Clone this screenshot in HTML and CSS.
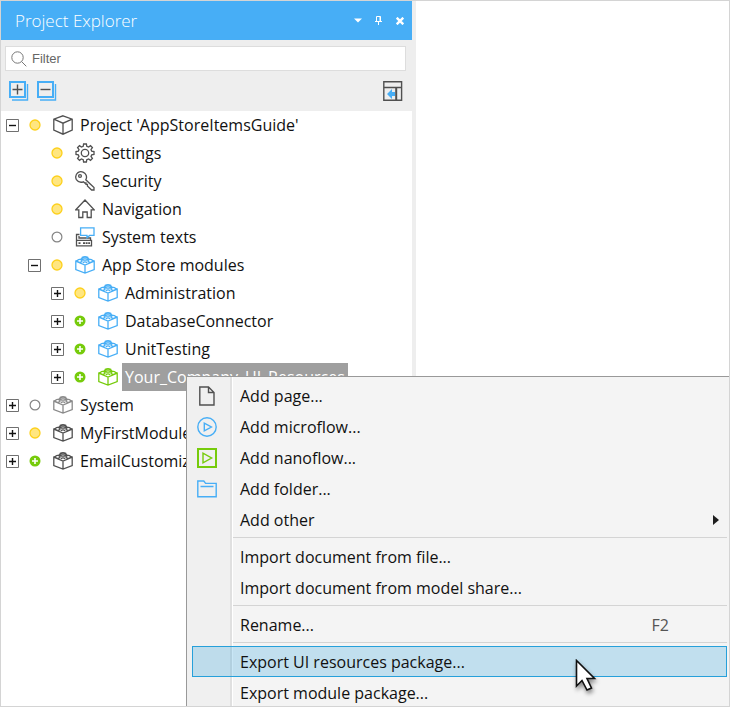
FILE: index.html
```html
<!DOCTYPE html>
<html lang="en">
<head>
<meta charset="utf-8">
<title>Project Explorer</title>
<link rel="stylesheet" href="styles.css">
</head>
<body>
<svg class="sprite" aria-hidden="true">
  <symbol id="brick" viewBox="0 0 20 20">
    <path d="M.8 6.2V14.6L10 18 19.2 14.6V6.2L10 10zM10 10V18M.8 6.2 3 5.2M19.2 6.2 17 5.2M5.6 4 7.2 3.4M14.4 4 12.8 3.4M7.2 2.4Q10 .8 12.8 2.4V4.4Q10 6 7.2 4.4zM7.2 2.4Q10 4 12.8 2.4M2.6 5.2Q4.6 3.4 6.8 5.2V6.6Q4.6 8 2.6 6.6zM13.2 5.2Q15.4 3.4 17.4 5.2V6.6Q15.4 8 13.2 6.6zM7.8 7.6Q10 6.2 12.2 7.6"/>
  </symbol>
  <symbol id="plus-box" viewBox="0 0 13 13"><path class="box" d="M.5.5H12.5V12.5H.5z"/><path class="mark" d="M3 6.5H10M6.5 3V10"/></symbol>
  <symbol id="minus-box" viewBox="0 0 13 13"><path class="box" d="M.5.5H12.5V12.5H.5z"/><path class="mark" d="M3 6.5H10"/></symbol>
  <symbol id="dot-yellow" viewBox="0 0 12 12"><circle cx="6" cy="6" r="5" fill="#ffe680" stroke="#fdd01c" stroke-width="1.3"/></symbol>
  <symbol id="dot-empty" viewBox="0 0 12 12"><circle cx="6" cy="6" r="4.9" fill="#fff" stroke="#858585" stroke-width="1.2"/></symbol>
  <symbol id="dot-green" viewBox="0 0 12 12"><circle cx="6" cy="6" r="5.5" fill="#76cb0b"/><path d="M3 6H9M6 3V9" stroke="#fff" stroke-width="1.6"/></symbol>
</svg>

<div class="frame">
  <section class="panel">
    <header class="title-bar">
      <h1>Project Explorer</h1>
      <button type="button" aria-label="Window options"><svg width="8" height="5" viewBox="0 0 8 5"><path d="M0 .5H8L4 4.5z" fill="#fff"/></svg></button>
      <button type="button" aria-label="Pin"><svg width="8" height="9" viewBox="0 0 8 9"><path d="M1.5 5V.5H5.5V5M0 5.5H7M3.5 5.5V9M5 .5V5" fill="none" stroke="#fff"/></svg></button>
      <button type="button" aria-label="Close"><svg width="8" height="8" viewBox="0 0 8 8"><path d="M.7.7 7.3 7.3M7.3.7.7 7.3" stroke="#fff" stroke-width="2.4"/></svg></button>
    </header>
    <div class="tools">
      <label class="filter">
        <svg width="16" height="16" viewBox="0 0 16 16"><circle cx="6.5" cy="6.5" r="5.7" fill="none" stroke="#777"/><path d="M10.6 10.6 15.3 15.3" stroke="#777"/></svg>
        <input type="text" placeholder="Filter" aria-label="Filter">
      </label>
      <div class="tool-row">
        <button type="button" aria-label="Expand all"><svg width="20" height="20" viewBox="0 0 20 20"><path d="M3 19H18.5V3" class="blue"/><path d="M1 1H16V16H1z" class="blue thick"/><path d="M3.5 8.5H13.5M8.5 3.5V13.5" class="dark"/></svg></button>
        <button type="button" aria-label="Collapse all"><svg width="20" height="20" viewBox="0 0 20 20"><path d="M3 19H18.5V3" class="blue"/><path d="M1 1H16V16H1z" class="blue thick"/><path d="M3.5 8.5H13.5" class="dark"/></svg></button>
        <button type="button" class="dock" aria-label="Select in explorer"><svg width="20" height="20" viewBox="0 0 20 20"><path d="M.8.8H18.6V19.2H.8zM.8 6.5H18.6" class="dark"/><path d="M13.2 6.5V19" class="dark thick"/><path d="M4 13 9 8V11H12V15H9V18z" fill="#47aef6"/></svg></button>
      </div>
    </div>

    <ul class="tree">
      <li class="row"><button type="button" class="toggle" aria-label="Collapse"><svg><use href="#minus-box"/></svg></button><svg class="dot"><use href="#dot-yellow"/></svg>
        <svg class="icon" viewBox="0 0 20 20"><path d="M10 .8 19.2 4.2V15L10 19.2.8 15V4.2zM.8 4.2 10 8.2 19.2 4.2M10 8.2V19.2"/></svg><span class="label">Project 'AppStoreItemsGuide'</span></li>
      <li class="row level-1"><span class="toggle"></span><svg class="dot"><use href="#dot-yellow"/></svg>
        <svg class="icon" viewBox="0 0 20 20"><circle cx="10" cy="10" r="3.7"/><path d="M8.6 1H11.4L11.8 3.4 13.6 4.1 15.5 2.7 17.4 4.6 16 6.5 16.7 8.2 19 8.6V11.4L16.7 11.8 16 13.5 17.4 15.4 15.5 17.3 13.6 15.9 11.8 16.6 11.4 19H8.6L8.2 16.6 6.4 15.9 4.5 17.3 2.6 15.4 4 13.5 3.3 11.8 1 11.4V8.6L3.3 8.2 4 6.5 2.6 4.6 4.5 2.7 6.4 4.1 8.2 3.4z"/></svg><span class="label">Settings</span></li>
      <li class="row level-1"><span class="toggle"></span><svg class="dot"><use href="#dot-yellow"/></svg>
        <svg class="icon" viewBox="0 0 20 20"><circle cx="5" cy="5" r="1.4"/><path d="M10.8 8.8Q12.6 5.2 10.1 2.6Q6.6-.6 3 1.6Q-.6 4.6 1.4 8.6Q4 12.4 8.4 10.8L9.8 12H11V13.4H12.4V15L16.6 19H19V16.6z"/></svg><span class="label">Security</span></li>
      <li class="row level-1"><span class="toggle"></span><svg class="dot"><use href="#dot-yellow"/></svg>
        <svg class="icon" viewBox="0 0 20 20"><path d="M.8 10.8 10 1 19.2 10.8H16.2V18.5H12.2V13H7.8V18.5H3.8V10.8z"/></svg><span class="label">Navigation</span></li>
      <li class="row level-1"><span class="toggle"></span><svg class="dot"><use href="#dot-empty"/></svg>
        <svg class="icon" viewBox="0 0 20 20"><path d="M4.5 7.5H1.5V13.4H16.5V18.8H1.5V13.4M4 9V11H15.5V13"/><path d="M3.5 16.1H5.5M8 16.1H15" stroke-width="1.6" stroke-dasharray="2 .6"/><path class="bubble" d="M5.6.9H19V8.4H14.6L12 10.8V8.4H5.6z"/></svg><span class="label">System texts</span></li>
      <li class="row level-1"><button type="button" class="toggle" aria-label="Collapse"><svg><use href="#minus-box"/></svg></button><svg class="dot"><use href="#dot-yellow"/></svg><svg class="icon sky"><use href="#brick"/></svg><span class="label">App Store modules</span></li>
      <li class="row level-2"><button type="button" class="toggle" aria-label="Expand"><svg><use href="#plus-box"/></svg></button><svg class="dot"><use href="#dot-yellow"/></svg><svg class="icon sky"><use href="#brick"/></svg><span class="label">Administration</span></li>
      <li class="row level-2"><button type="button" class="toggle" aria-label="Expand"><svg><use href="#plus-box"/></svg></button><svg class="dot"><use href="#dot-green"/></svg><svg class="icon sky"><use href="#brick"/></svg><span class="label">DatabaseConnector</span></li>
      <li class="row level-2"><button type="button" class="toggle" aria-label="Expand"><svg><use href="#plus-box"/></svg></button><svg class="dot"><use href="#dot-green"/></svg><svg class="icon sky"><use href="#brick"/></svg><span class="label">UnitTesting</span></li>
      <li class="row level-2"><button type="button" class="toggle" aria-label="Expand"><svg><use href="#plus-box"/></svg></button><svg class="dot"><use href="#dot-green"/></svg><svg class="icon green"><use href="#brick"/></svg><span class="label selected">Your_Company_UI_Resources</span></li>
      <li class="row"><button type="button" class="toggle" aria-label="Expand"><svg><use href="#plus-box"/></svg></button><svg class="dot"><use href="#dot-empty"/></svg><svg class="icon gray"><use href="#brick"/></svg><span class="label">System</span></li>
      <li class="row"><button type="button" class="toggle" aria-label="Expand"><svg><use href="#plus-box"/></svg></button><svg class="dot"><use href="#dot-yellow"/></svg><svg class="icon"><use href="#brick"/></svg><span class="label">MyFirstModule</span></li>
      <li class="row"><button type="button" class="toggle" aria-label="Expand"><svg><use href="#plus-box"/></svg></button><svg class="dot"><use href="#dot-green"/></svg><svg class="icon"><use href="#brick"/></svg><span class="label">EmailCustomiz</span></li>
    </ul>
  </section>

  <div class="menu">
    <button type="button" class="item"><svg class="glyph" viewBox="0 0 20 20"><path d="M2.8 1H11.5L17 6.5V19H2.8zM11.5 1V6.5H17" stroke="#505050"/></svg><span>Add page...</span></button>
    <button type="button" class="item"><svg class="glyph" viewBox="0 0 20 20"><circle cx="10" cy="10" r="9.2" stroke="#47aef6"/><path d="M7.3 6.2V13.8L14.4 10z" stroke="#47aef6"/></svg><span>Add microflow...</span></button>
    <button type="button" class="item"><svg class="glyph" viewBox="0 0 20 20"><path d="M1 1H19V19H1z" stroke="#76cb0b" stroke-width="2"/><path d="M6 5.2V14.8L14.6 10z" stroke="#76cb0b"/></svg><span>Add nanoflow...</span></button>
    <button type="button" class="item"><svg class="glyph" viewBox="0 0 20 20"><path d="M.8 17.8V2H6.8L8.6 4.4H19.2V17.8zM3.5 7.5H16.5" stroke="#47aef6"/></svg><span>Add folder...</span></button>
    <button type="button" class="item"><span class="glyph"></span><span>Add other</span><svg class="more" width="6" height="10" viewBox="0 0 6 10"><path d="M0 0 6 5 0 10z" fill="#1e1e1e"/></svg></button>
    <hr>
    <button type="button" class="item"><span class="glyph"></span><span>Import document from file...</span></button>
    <button type="button" class="item"><span class="glyph"></span><span>Import document from model share...</span></button>
    <hr>
    <button type="button" class="item"><span class="glyph"></span><span>Rename...</span><kbd>F2</kbd></button>
    <hr>
    <button type="button" class="item active"><span class="glyph"></span><span>Export UI resources package...</span></button>
    <button type="button" class="item"><span class="glyph"></span><span>Export module package...</span></button>
  </div>

  <svg class="pointer" width="24" height="38" viewBox="0 0 24 38" aria-hidden="true"><path d="M2.5 1.5V27L8 21.5 13 31 17.5 29 13 19.5H20.5z" fill="#fff" stroke="#111" stroke-width="1.6"/></svg>
</div>
</body>
</html>
```
FILE: styles.css
```css
* { box-sizing: border-box; }

body {
  margin: 0;
  background: #fff;
  color: #111;
  font: 16px/28px "Open Sans", "Noto Sans", sans-serif;
}

button {
  margin: 0;
  padding: 0;
  border: 0;
  background: none;
  color: inherit;
  font: inherit;
}

svg { display: block; flex: none; }

.sprite { position: absolute; width: 0; height: 0; }

.frame {
  position: relative;
  display: flex;
  height: 100vh;
  border: 1px solid #d4d4d4;
  overflow: hidden;
}

.panel {
  width: 57%;
  border-right: 4px solid #eee;
}

.title-bar {
  display: flex;
  align-items: center;
  gap: 13px;
  height: 39px;
  padding: 0 8px 0 14px;
  background: #47aef6;
  color: #fff;
}

.title-bar h1 {
  flex: 1;
  margin: 0;
  font-size: 17px;
  font-weight: 300;
}

.tools {
  padding: 6px 6px 10px 4px;
  background: #eee;
}

.filter {
  display: flex;
  align-items: center;
  gap: 5px;
  height: 25px;
  padding: 0 5px;
  border: 1px solid #ddd;
  background: #fff;
}

.filter input {
  flex: 1;
  min-width: 0;
  padding: 0;
  border: 0;
  outline: 0;
  background: none;
  font: 13px "Liberation Sans", Arial, sans-serif;
}

.filter input::placeholder { color: #666; opacity: 1; }

.tool-row {
  display: flex;
  gap: 8px;
  padding: 10px 3px 0 4px;
}

.dock { margin-left: auto; }

.blue { fill: none; stroke: #47aef6; stroke-width: 1.4; }
.blue.thick { stroke-width: 2; }
.dark { fill: none; stroke: #505050; stroke-width: 1.4; }
.dark.thick { stroke-width: 2; }

.tree {
  margin: 0;
  padding: 0;
  list-style: none;
}

.row {
  display: flex;
  align-items: center;
  height: 28px;
  padding-left: 5px;
  white-space: nowrap;
}

.level-1 { padding-left: 27px; }
.level-2 { padding-left: 50px; }

.toggle { width: 13px; height: 13px; }
.toggle svg { width: 13px; height: 13px; }
.box { fill: #fff; stroke: #707070; }
.mark { fill: none; stroke: #111; stroke-width: 1.4; }

.dot {
  width: 12px;
  height: 12px;
  margin: 0 12px 0 10px;
}

.icon {
  width: 20px;
  height: 20px;
  fill: none;
  stroke: #505050;
  stroke-width: 1.3;
}

.sky, .bubble { stroke: #47aef6; }
.bubble { fill: #fff; }
.green { stroke: #76cb0b; }
.gray { stroke: #8a8a8a; }

.label { margin-left: 4px; padding: 0 3px; }
.selected { background: #9f9f9f; color: #fff; }

.menu {
  position: absolute;
  inset: 375px 0 0 185px;
  padding: 3px 2px 0 5px;
  border: solid #999;
  border-width: 1px 0 0 1px;
  background: linear-gradient(to right, #f0f0f0 43px, #e0e0e0 43px 45px, #fff 45px 46px, #f4f4f4 46px);
}

.item {
  display: flex;
  align-items: center;
  width: 100%;
  height: 31px;
  padding: 0 7px 0 4px;
  border: 1px solid transparent;
  text-align: left;
  white-space: nowrap;
}

.item.active {
  border-color: #26a0da;
  background: rgba(38, 160, 218, .25);
}

.glyph {
  width: 20px;
  height: 20px;
  margin-right: 23px;
  fill: none;
  stroke-width: 1.4;
}

.more { margin-left: auto; }

kbd {
  margin-left: auto;
  margin-right: 50px;
  color: #555;
  font: inherit;
}

hr {
  height: 1px;
  margin: 2px 0 3px 41px;
  border: 0;
  background: #d4d4d4;
}

.pointer {
  position: absolute;
  top: 658px;
  left: 573px;
  filter: drop-shadow(1px 3px 2px rgba(0, 0, 0, .45));
}
```
